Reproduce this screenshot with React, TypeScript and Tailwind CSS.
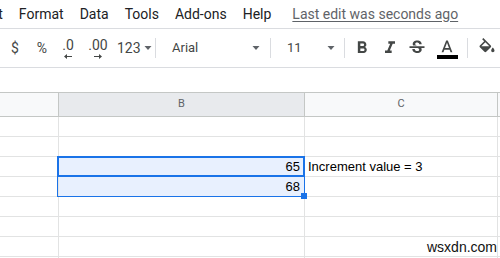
import React from 'react';

const MENUS = ['Insert', 'Format', 'Data', 'Tools', 'Add-ons', 'Help'];

const ROWS: { b?: string; c?: string }[] = [
  {},
  {},
  { b: '65', c: 'Increment value = 3' },
  { b: '68' },
  {},
  {},
  {},
  {},
];

function Caret() {
  return (
    <svg width="8" height="4" viewBox="0 0 8 4" className="shrink-0">
      <path d="M0.5 0h7L4 4z" fill="#5f6368" />
    </svg>
  );
}

function Sep() {
  return <div className="w-px h-[20px] bg-[#dadce0] shrink-0" />;
}

function Icon({ d, className = '' }: { d: string; className?: string }) {
  return (
    <svg width="20" height="20" viewBox="0 0 24 24" className={className}>
      <path d={d} fill="#444746" />
    </svg>
  );
}

const BOLD =
  'M15.6 10.79c.97-.67 1.65-1.77 1.65-2.79 0-2.26-1.75-4-4-4H7v14h7.04c2.09 0 3.71-1.7 3.71-3.79 0-1.52-.86-2.82-2.15-3.42zM10 6.5h3c.83 0 1.5.67 1.5 1.5s-.67 1.5-1.5 1.5h-3v-3zm3.5 9H10v-3h3.5c.83 0 1.5.67 1.5 1.5s-.67 1.5-1.5 1.5z';
const ITALIC = 'M10 4v3h2.21l-3.42 8H6v3h8v-3h-2.21l3.42-8H18V4z';
const STRIKE =
  'M7.24 8.75c-.26-.48-.39-1.03-.39-1.67 0-.61.13-1.16.4-1.67.26-.5.63-.93 1.11-1.29.48-.35 1.05-.63 1.7-.83.66-.19 1.39-.29 2.18-.29.81 0 1.54.11 2.21.34.66.22 1.23.54 1.69.94.47.4.83.88 1.08 1.43.25.55.38 1.15.38 1.81h-3.01c0-.31-.05-.59-.15-.85-.09-.27-.24-.49-.44-.68-.2-.19-.45-.33-.75-.44-.3-.1-.66-.16-1.06-.16-.39 0-.74.04-1.03.13-.29.09-.53.21-.72.36-.19.16-.34.34-.44.55-.1.21-.15.43-.15.66 0 .48.25.88.74 1.21.38.25.77.48 1.41.7H7.39c-.05-.08-.11-.17-.15-.25zM21 12v-2H3v2h9.62c.18.07.4.14.55.2.37.17.66.34.87.51.21.17.35.36.43.57.07.2.11.43.11.69 0 .23-.05.45-.14.66-.09.2-.23.38-.42.53-.19.15-.42.26-.71.35-.29.08-.63.13-1.01.13-.43 0-.83-.04-1.18-.13s-.66-.23-.91-.42c-.25-.19-.45-.44-.59-.75-.14-.31-.25-.76-.25-1.21H6.4c0 .55.08 1.13.24 1.58.16.45.37.85.65 1.21.28.35.6.66.98.92.37.26.78.48 1.22.65.44.17.9.3 1.38.39.48.08.96.13 1.44.13.8 0 1.53-.09 2.18-.28s1.21-.45 1.67-.79c.46-.34.82-.77 1.07-1.27s.38-1.07.38-1.71c0-.6-.1-1.14-.31-1.61-.05-.11-.11-.23-.17-.33H21z';
const TEXT_A = 'M11 3L5.5 17h2.25l1.12-3h6.25l1.12 3h2.25L13 3h-2zm-1.38 9L12 5.67 14.38 12H9.62z';
const FILL =
  'M16.56 8.94L7.62 0 6.21 1.41l2.38 2.38-5.15 5.15c-.59.59-.59 1.54 0 2.12l5.5 5.5c.29.29.68.44 1.06.44s.77-.15 1.06-.44l5.5-5.5c.59-.58.59-1.53 0-2.12zM5.21 10L10 5.21 14.79 10H5.21zM19 11.5s-2 2.17-2 3.5c0 1.1.9 2 2 2s2-.9 2-2c0-1.33-2-3.5-2-3.5z';

function Arrow({ dir }: { dir: 'left' | 'right' }) {
  return (
    <svg width="8" height="5" viewBox="0 0 8 5" className="absolute top-[18px] left-1/2 -translate-x-1/2">
      {dir === 'left' ? (
        <path d="M0 2.5L3 0v2h5v1H3v2z" fill="#444746" />
      ) : (
        <path d="M8 2.5L5 0v2H0v1h5v2z" fill="#444746" />
      )}
    </svg>
  );
}

export default function App() {
  return (
    <div className="w-[500px] h-[258px] overflow-hidden bg-white relative font-['Roboto',sans-serif]">
      {/* menu bar */}
      <div className="h-[28px] flex items-center gap-[16px] text-[14px] text-[#202124] whitespace-nowrap -ml-[33px]">
        {MENUS.map(m => (
          <span key={m}>{m}</span>
        ))}
        <span className="ml-[5px] text-[#5f6368] underline underline-offset-2">Last edit was seconds ago</span>
      </div>

      {/* toolbar */}
      <div className="h-[40px] border-y border-[#dadce0] flex items-center text-[14px] text-[#444746] whitespace-nowrap">
        <div className="w-[3px] shrink-0" />
        <div className="w-[24px] text-center shrink-0">$</div>
        <div className="w-[30px] text-center shrink-0">%</div>
        <div className="w-[22px] shrink-0 relative h-[24px] flex justify-center">
          <span className="leading-[18px]">.0</span>
          <Arrow dir="left" />
        </div>
        <div className="w-[38px] shrink-0 relative h-[24px] flex justify-center">
          <span className="leading-[18px]">.00</span>
          <Arrow dir="right" />
        </div>
        <div className="w-[32px] shrink-0 flex items-center gap-[3px]">
          <span>123</span>
          <Caret />
        </div>
        <div className="w-[6px] shrink-0" />
        <Sep />
        <div className="w-[114px] shrink-0 flex items-center justify-between pl-[16px] pr-[10px]">
          <span className="text-[13px]">Arial</span>
          <Caret />
        </div>
        <Sep />
        <div className="w-[73px] shrink-0 flex items-center justify-between pl-[16px] pr-[9px]">
          <span className="text-[13px]">11</span>
          <Caret />
        </div>
        <Sep />
        <div className="w-[3px] shrink-0" />
        <div className="w-[28px] shrink-0 flex justify-center">
          <Icon d={BOLD} />
        </div>
        <div className="w-[28px] shrink-0 flex justify-center">
          <Icon d={ITALIC} />
        </div>
        <div className="w-[26px] shrink-0 flex justify-center">
          <Icon d={STRIKE} />
        </div>
        <div className="w-[34px] shrink-0 flex flex-col items-center">
          <Icon d={TEXT_A} className="-mb-[3px]" />
          <div className="w-[21px] h-[4px] bg-black" />
        </div>
        <div className="w-[3px] shrink-0" />
        <Sep />
        <div className="w-[38px] shrink-0 flex justify-center">
          <Icon d={FILL} />
        </div>
      </div>

      {/* formula area */}
      <div className="h-[24px]" />

      {/* grid */}
      <div className="relative">
        <div className="flex h-[25px] border-y border-[#c4c7c5] text-[11px] text-[#5f6368]">
          <div className="w-[59px] shrink-0 bg-[#f8f9fa] border-r border-[#c4c7c5]" />
          <div className="w-[246px] shrink-0 bg-[#e8eaed] border-r border-[#c4c7c5] flex items-center justify-center">B</div>
          <div className="w-[193px] shrink-0 bg-[#f8f9fa] border-r border-[#c4c7c5] flex items-center justify-center">C</div>
          <div className="flex-1 bg-[#f8f9fa]" />
        </div>
        {ROWS.map((r, i) => (
          <div key={i} className="flex h-[20px] border-b border-[#e2e3e3] text-[13px] text-black font-['Liberation_Sans',Arial,sans-serif]">
            <div className="w-[59px] shrink-0 border-r border-[#e2e3e3]" />
            <div
              className={`w-[246px] shrink-0 border-r border-[#e2e3e3] flex items-center justify-end pr-[4px] ${
                i === 2 || i === 3 ? 'bg-[#e8f0fe]' : ''
              }`}
            >
              {r.b}
            </div>
            <div className="w-[193px] shrink-0 border-r border-[#e2e3e3] flex items-center pl-[3px]">{r.c}</div>
            <div className="flex-1" />
          </div>
        ))}

        {/* selection */}
        <div className="absolute left-[57px] top-[64px] w-[248px] h-[41px] border border-[#1a73e8]" />
        <div className="absolute left-[57px] top-[64px] w-[248px] h-[21px] border-2 border-[#1a73e8]" />
        <div className="absolute left-[301px] top-[101px] w-[6px] h-[6px] bg-[#1a73e8]" />

        {/* watermark */}
        <div className="absolute left-[427px] top-[147px] text-[14px] leading-[16px] text-[#111] font-['Liberation_Sans',Arial,sans-serif]">
          wsxdn.com
        </div>
      </div>
    </div>
  );
}
